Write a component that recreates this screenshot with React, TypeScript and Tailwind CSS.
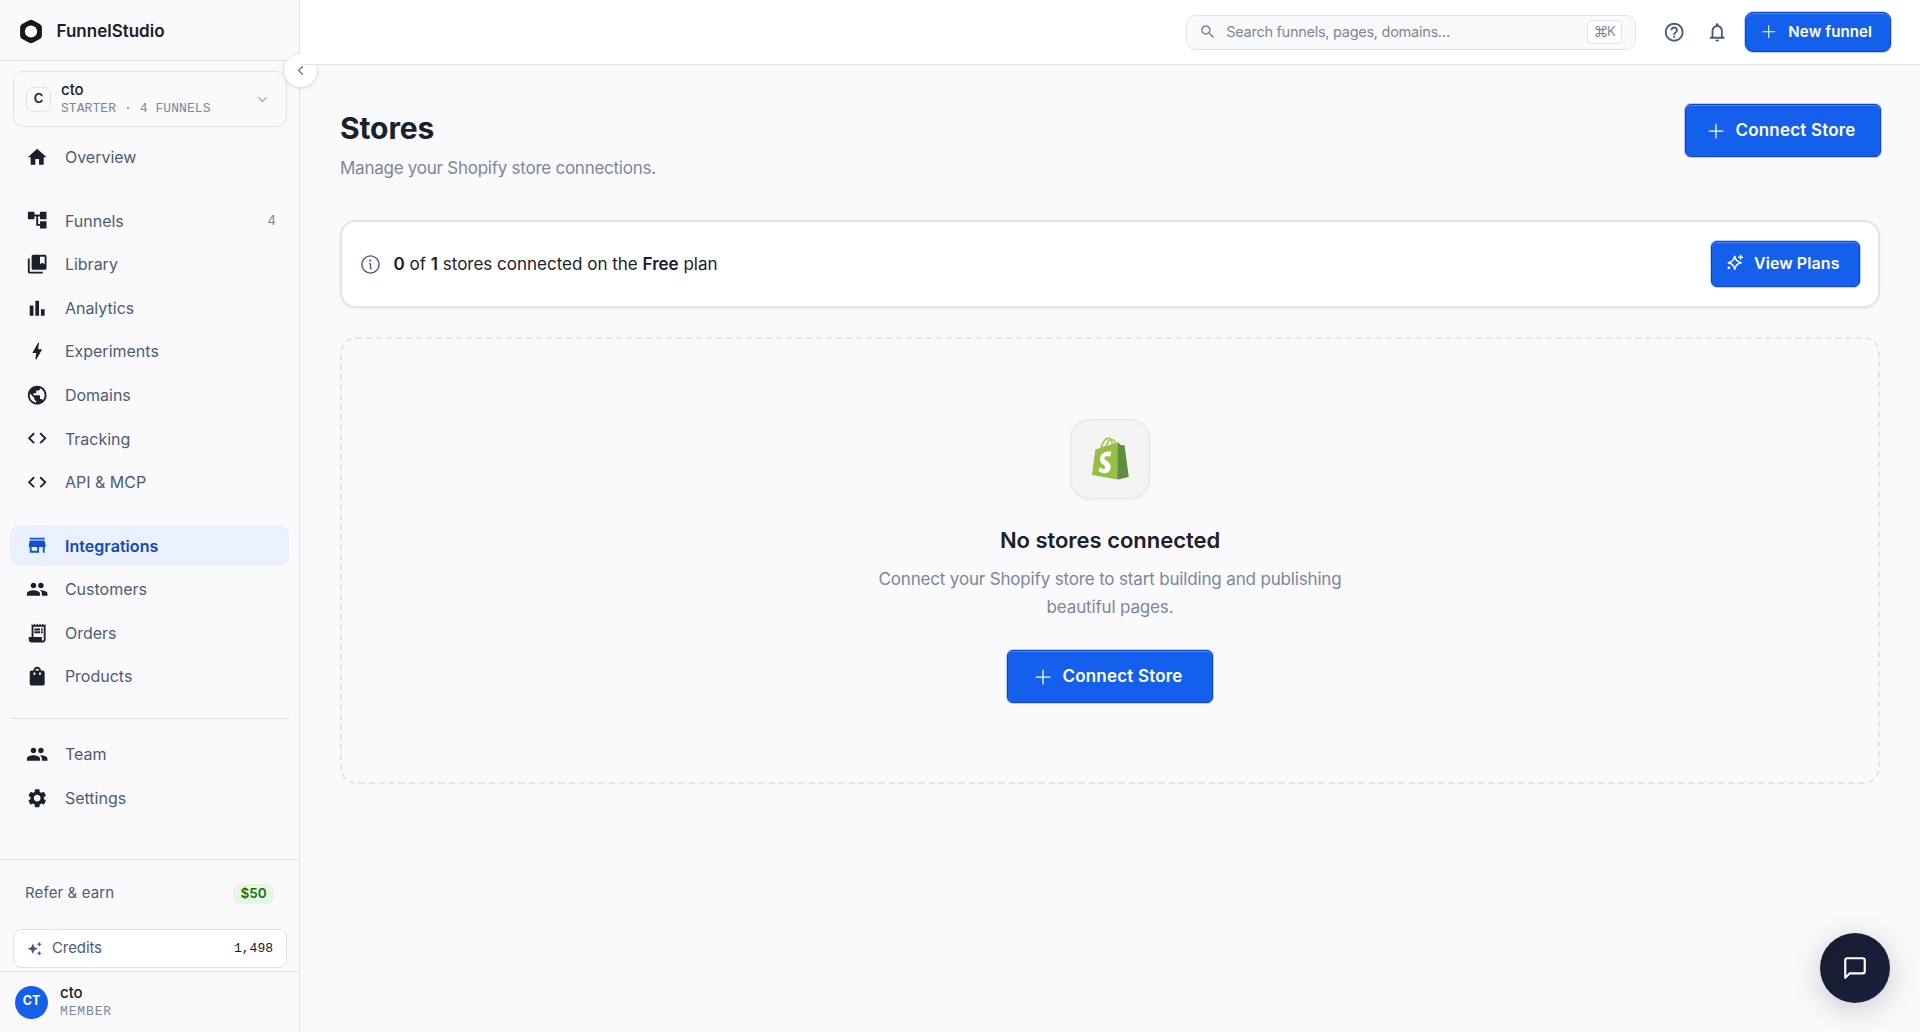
import type { ReactNode } from 'react';
import type { IconType } from 'react-icons';
import {
  MdAccountTree,
  MdAutoAwesome,
  MdBarChart,
  MdBolt,
  MdCode,
  MdCollectionsBookmark,
  MdHelpOutline,
  MdHome,
  MdNotificationsNone,
  MdPeople,
  MdPublic,
  MdReceiptLong,
  MdSearch,
  MdSettings,
  MdShoppingBag,
  MdStore,
} from 'react-icons/md';
import { PiInfo, PiPlus } from 'react-icons/pi';
import { FiMessageSquare } from 'react-icons/fi';
import { ChevronDown, ChevronLeft } from 'lucide-react';
import clsx from 'clsx';

interface NavEntry {
  label: string;
  icon: IconType;
  count?: number;
  active?: boolean;
}

const mainNav: NavEntry[][] = [
  [{ label: 'Overview', icon: MdHome }],
  [
    { label: 'Funnels', icon: MdAccountTree, count: 4 },
    { label: 'Library', icon: MdCollectionsBookmark },
    { label: 'Analytics', icon: MdBarChart },
    { label: 'Experiments', icon: MdBolt },
    { label: 'Domains', icon: MdPublic },
    { label: 'Tracking', icon: MdCode },
    { label: 'API & MCP', icon: MdCode },
  ],
  [
    { label: 'Integrations', icon: MdStore, active: true },
    { label: 'Customers', icon: MdPeople },
    { label: 'Orders', icon: MdReceiptLong },
    { label: 'Products', icon: MdShoppingBag },
  ],
];

const footerNav: NavEntry[] = [
  { label: 'Team', icon: MdPeople },
  { label: 'Settings', icon: MdSettings },
];

function NavGroup({ items }: { items: NavEntry[] }) {
  return (
    <div className="flex flex-col gap-0.5">
      {items.map(({ label, icon: Icon, count, active }) => (
        <a
          key={label}
          className={clsx(
            'flex h-[41.6px] items-center rounded-[10px] pr-[13px] pl-4 text-[16px]',
            active ? 'bg-[#eaf1fe] font-semibold tracking-[0.06px] text-[#1147bb]' : 'text-[#4a5c78]',
          )}
        >
          <Icon className={clsx('size-[22.4px]', active ? 'text-[#1350cf]' : 'text-[#1a202c]')} />
          <span className="ml-[16.5px]">{label}</span>
          {count !== undefined && <span className="ml-auto text-[13px] text-[#7b879b]">{count}</span>}
        </a>
      ))}
    </div>
  );
}

function PrimaryButton({ className, children }: { className: string; children: ReactNode }) {
  return (
    <button
      className={clsx(
        'flex items-center justify-center border border-[#0f47b8] bg-[#145fec] font-semibold text-white shadow-[0_0_0_1px_rgba(21,94,239,0.28),inset_0_1px_0_rgba(255,255,255,0.25)]',
        className,
      )}
    >
      {children}
    </button>
  );
}

function SparkleIcon() {
  return (
    <svg
      viewBox="0 0 24 24"
      fill="none"
      stroke="currentColor"
      strokeWidth="2"
      strokeLinecap="round"
      strokeLinejoin="round"
      className="size-[17.5px]"
    >
      <path d="M12 3c.9 5.600 3.400 8.100 9 9-5.600.9-8.100 3.400-9 9-.9-5.600-3.400-8.100-9-9 5.600-.9 8.100-3.400 9-9z" />
      <path d="M20 2v5M22.500 4.500h-5" />
      <circle cx="4" cy="19" r="1" />
    </svg>
  );
}

function FunnelLogo() {
  return (
    <svg viewBox="0 0 24 25" className="h-[25px] w-6">
      <path
        d="M10.2 1.2a4 4 0 0 1 3.6 0l7 3.8a4 4 0 0 1 2.1 3.5v8a4 4 0 0 1-2.1 3.5l-7 3.8a4 4 0 0 1-3.6 0l-7-3.8a4 4 0 0 1-2.1-3.5v-8A4 4 0 0 1 3.2 5z"
        fill="#141a1c"
      />
      <circle cx="12" cy="12.5" r="6.1" fill="#fff" />
    </svg>
  );
}

function ShopifyLogo() {
  return (
    <svg viewBox="0 4 109 124" className="mb-0.5 h-[43px] w-[37px]">
      <path
        fill="#95bf47"
        fillRule="evenodd"
        d="M95.6 28.2c-.1-.6-.6-1-1.1-1s-9.3-.2-9.3-.2-7.4-7.2-8.1-7.9c-.7-.7-2.2-.5-2.7-.3 0 0-1.4.4-3.7 1.1-.4-1.3-1-2.8-1.8-4.4-2.6-5-6.5-7.7-11.1-7.7-.3 0-.6 0-1 .1-.1-.2-.3-.3-.4-.5-2-2.2-4.6-3.2-7.7-3.1-6 .2-12 4.5-16.8 12.2-3.4 5.4-6 12.2-6.7 17.5-6.9 2.1-11.7 3.6-11.8 3.7-3.5 1.1-3.6 1.2-4 4.5C9.1 44.6 0 114.7 0 114.7l75.6 13.1 32.8-8.1S95.7 28.9 95.6 28.2zM67.2 21.2c-1.7.5-3.7 1.2-5.9 1.8 0-3-.4-7.3-1.8-10.9 4.5.9 6.7 6 7.7 9.1zM57.2 24.3c-4 1.2-8.4 2.6-12.8 3.9 1.2-4.7 3.6-9.4 6.4-12.5 1.1-1.1 2.6-2.4 4.3-3.2 1.8 3.6 2.1 8.5 2.1 11.8zM49.1 8.3c1.4 0 2.6.3 3.6 1-1.6.8-3.2 2.1-4.7 3.6-3.8 4.1-6.7 10.5-7.9 16.6-3.6 1.1-7.2 2.2-10.5 3.2C31.8 23.3 39.9 8.6 49.1 8.3z"
      />
      <path
        fill="#5e8e3e"
        d="M94.5 27.2c-.5 0-9.3-.2-9.3-.2s-7.4-7.2-8.1-7.9c-.3-.3-.6-.4-1-.5l-.5 109.2 32.8-8.1S95.7 28.9 95.6 28.2c-.1-.6-.6-1-1.1-1z"
      />
      <path
        fill="#fff"
        d="M57.2 46.8l-3.8 14.4s-4.3-2-9.4-1.6c-7.5.5-7.5 5.2-7.5 6.4.4 6.4 17.3 7.8 18.3 22.9.7 11.9-6.3 20-16.4 20.6-12.2.8-18.9-6.4-18.9-6.4l2.6-11s6.7 5.1 12.1 4.7c3.5-.2 4.8-3.1 4.7-5.1-.5-8.4-14.3-7.9-15.2-21.7-.8-11.6 6.8-23.4 23.6-24.4 6.5-.5 9.9 1.2 9.9 1.2z"
      />
    </svg>
  );
}

function Sidebar() {
  return (
    <aside className="relative flex w-[300px] shrink-0 flex-col border-r border-[#e3e3e6]">
      <div className="flex h-[61px] shrink-0 items-center gap-[13.5px] border-b border-[#e3e3e6] pt-[3px] pl-[19px]">
        <FunnelLogo />
        <span className="text-[17px] font-semibold">FunnelStudio</span>
      </div>

      {/* Collapse handle */}
      <button className="absolute top-[53px] -right-[19px] flex size-[35px] items-center justify-center rounded-full border border-[#e3e3e6] bg-white text-[#64748b] shadow-[0_1px_3px_rgba(0,0,0,0.1)]">
        <ChevronLeft className="size-[15px]" />
      </button>

      {/* Workspace switcher */}
      <div className="mt-[10px] mr-3 ml-[13px] flex h-14 shrink-0 items-center rounded-[10px] border border-[#e3e3e6] pr-4 pl-3">
        <div className="flex size-[25px] items-center justify-center rounded-[7px] border border-[#e3e3e6] text-[13px] font-semibold">
          C
        </div>
        <div className="ml-2.5 flex flex-col pt-px">
          <span className="text-[15px] leading-[18px] font-medium">cto</span>
          <span className="font-['Liberation_Mono',monospace] text-[13px] leading-[19px] tracking-[0.07px] text-[#7b879b]">
            STARTER · 4 FUNNELS
          </span>
        </div>
        <ChevronDown className="ml-auto size-[15px] text-[#94a0b2]" />
      </div>

      <nav className="flex flex-col px-[10px] pt-[9.4px]">
        <div className="flex flex-col gap-[21.8px]">
          {mainNav.map((items) => (
            <NavGroup key={items[0].label} items={items} />
          ))}
        </div>
        <div className="mt-[20.600px] border-t border-[#e3e3e6] pt-[14.800px]">
          <NavGroup items={footerNav} />
        </div>
      </nav>

      <div className="mt-auto h-[173px] shrink-0 border-t border-[#e3e3e6]">
        <div className="flex h-[69px] items-center justify-between px-[25px] pb-0.5">
          <span className="text-[15px] tracking-[0.12px] text-[#4a5c78]">Refer &amp; earn</span>
          <span className="flex h-5 w-[41px] items-center justify-center rounded-[7px] bg-[#e8f6e6] pb-px text-[13.5px] font-semibold text-[#12720f]">
            $50
          </span>
        </div>
        <div className="mr-3 ml-[13px] flex h-[39px] items-center rounded-lg border border-[#e3e3e6] bg-white px-[13px]">
          <MdAutoAwesome className="size-[15.5px] text-[#4a5c78]" />
          <span className="ml-[9.5px] text-[15px] tracking-[-0.1px] text-[#4a5c78]">Credits</span>
          <span className="ml-auto font-['Liberation_Mono',monospace] text-[13px] text-[#111827]">1,498</span>
        </div>
        <div className="mt-[3px] flex h-[61px] items-center border-t border-[#e3e3e6] pl-[15px]">
          <div className="flex size-[33px] items-center justify-center rounded-full bg-[#145fec] pb-0.5 text-[12.5px] font-bold text-white">
            CT
          </div>
          <div className="ml-3 flex flex-col">
            <span className="text-[15px] leading-[18px] font-medium">cto</span>
            <span className="font-['Liberation_Mono',monospace] text-[13px] leading-[19px] tracking-[0.87px] text-[#7b879b]">
              MEMBER
            </span>
          </div>
        </div>
      </div>
    </aside>
  );
}

function TopBar() {
  return (
    <header className="relative z-10 flex h-[65px] shrink-0 items-center justify-end border-b border-[#e3e3e6] bg-white pr-[29px]">
      <div className="flex h-[35px] w-[450px] items-center rounded-[10px] border border-[#e3e3e6] bg-[#fafafc] pr-[13px] pl-3">
        <MdSearch className="size-[17.5px] text-[#7b879b]" />
        <span className="ml-[9.5px] text-[14.5px] tracking-[-0.27px] text-[#7b879b]">
          Search funnels, pages, domains…
        </span>
        <kbd className="ml-auto flex h-6 w-[35px] items-center justify-center rounded-[4px] border border-[#e3e3e6] bg-white pb-0.5 font-['Inter',sans-serif] text-[#7b879b]">
          <span className="text-[15px] leading-none tracking-[-1.5px]">⌘</span>
          <span className="text-[13px] leading-none">K</span>
        </kbd>
      </div>
      <MdHelpOutline className="ml-[27px] size-[22.4px] text-[#4a5c78]" />
      <MdNotificationsNone className="ml-5 size-[22.4px] text-[#4a5c78]" />
      <PrimaryButton className="ml-[17px] h-10 w-[146px] gap-[11px] rounded-lg pr-[4px] text-[15px] tracking-[0.12px]">
        <PiPlus className="size-[17.5px]" />
        New funnel
      </PrimaryButton>
    </header>
  );
}

export default function App() {
  return (
    <div className="flex h-screen overflow-hidden bg-[#fafafc] font-['Inter',sans-serif] text-[#1a202c]">
      <Sidebar />
      <div className="flex min-w-0 flex-1 flex-col">
        <TopBar />
        <main className="flex flex-col px-10 pt-[39px]">
          <div className="flex h-[116px] items-start justify-between">
            <div>
              <h1 className="mt-1 text-[30px] leading-[40px] font-bold tracking-[-0.12px]">Stores</h1>
              <p className="mt-[7px] text-[17px] leading-[26px] tracking-[-0.25px] text-[#7b879b]">
                Manage your Shopify store connections.
              </p>
            </div>
            <PrimaryButton className="-mr-px h-[53px] w-[196px] gap-2.5 rounded-md pr-[5px] text-[17px] tracking-[0.18px]">
              <PiPlus className="size-5" />
              Connect Store
            </PrimaryButton>
          </div>

          {/* Plan usage */}
          <section className="flex h-[88px] items-center rounded-2xl border-2 border-[#e4e4e6] bg-white pr-[18px] pl-[17px] shadow-[0_1px_3px_rgba(0,0,0,0.06)]">
            <PiInfo className="size-[23px] text-[#4a5c78]" />
            <p className="ml-[11.5px] pt-px text-[17px]">
              <strong className="font-semibold">0</strong> of <strong className="font-semibold">1</strong> stores
              connected on the <strong className="font-semibold">Free</strong> plan
            </p>
            <PrimaryButton className="ml-auto h-[46px] w-[149px] gap-[10px] rounded-md pr-[5px] pb-0.5 text-[16px] tracking-[0.08px]">
              <SparkleIcon />
              View Plans
            </PrimaryButton>
          </section>

          {/* Empty state */}
          <section className="mt-[29px] flex h-[447px] flex-col items-center rounded-2xl border-2 border-dashed border-[#e4e4e6] pt-20">
            <div className="flex size-20 items-center justify-center rounded-[20px] border border-[#e4e4e6] bg-[#f4f4f5] shadow-[0_1px_3px_rgba(0,0,0,0.05)]">
              <ShopifyLogo />
            </div>
            <h2 className="mt-[26px] text-[22px] leading-[30px] font-semibold tracking-[-0.03px]">
              No stores connected
            </h2>
            <p className="mt-[10px] w-[480px] text-center text-[17px] leading-[28px] tracking-[-0.16px] text-[#7b879b]">
              Connect your Shopify store to start building and publishing beautiful pages.
            </p>
            <PrimaryButton className="mt-[29px] h-[53px] w-[206px] gap-2.5 rounded-md pr-[5px] text-[17px] tracking-[0.18px]">
              <PiPlus className="size-5" />
              Connect Store
            </PrimaryButton>
          </section>
        </main>
      </div>

      {/* Chat launcher */}
      <button className="fixed right-[30px] bottom-[29px] flex size-[70px] items-center justify-center rounded-full bg-linear-to-br from-[#1a1a2e] to-[#16213e] text-white shadow-[0_6px_30px_rgba(0,0,0,0.2)]">
        <FiMessageSquare className="size-[26px]" />
      </button>
    </div>
  );
}
